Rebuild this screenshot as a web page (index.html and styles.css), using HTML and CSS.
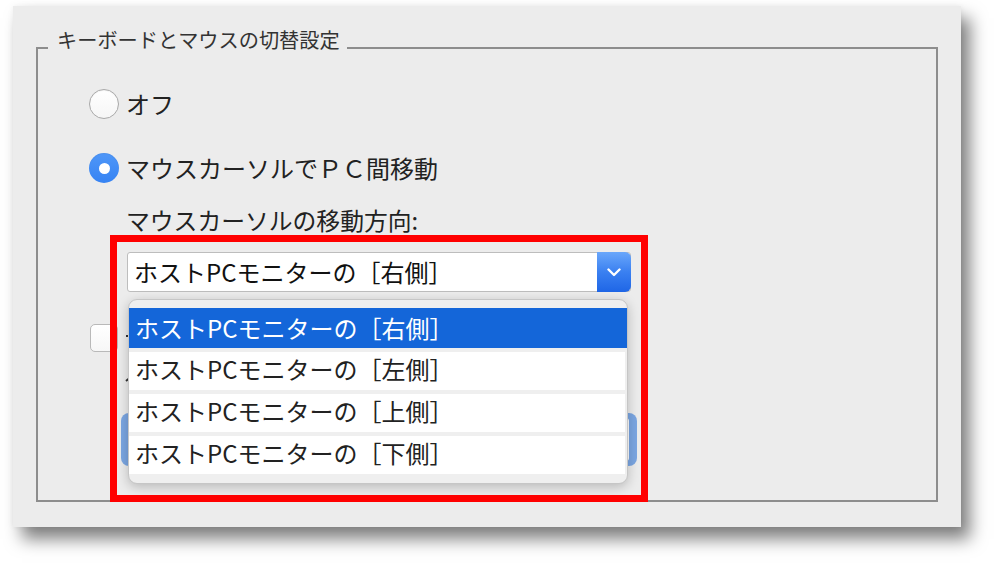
FILE: index.html
```html
<!DOCTYPE html>
<html lang="ja">
<head>
<meta charset="utf-8">
<title>キーボードとマウスの切替設定</title>
<link rel="stylesheet" href="styles.css">
</head>
<body>
<div class="window">
  <div class="group">
    <div class="legend">キーボードとマウスの切替設定</div>
    <div class="options">
      <div class="row row-first">
        <span class="radio"></span>
        <span class="label">オフ</span>
      </div>
      <div class="row row-second">
        <span class="radio radio-on"><span class="dot"></span></span>
        <span class="label">マウスカーソルでＰＣ間移動</span>
      </div>
      <div class="sub">
        <div class="sub-label">マウスカーソルの移動方向:</div>
        <div class="select-wrap">
          <div class="select">
            <div class="select-value">ホストPCモニターの［右側］</div>
            <div class="select-btn">
              <svg width="14" height="9" viewBox="0 0 14 9"><path d="M1.5 1.5 L7 7 L12.5 1.5" fill="none" stroke="#fff" stroke-width="2.4" stroke-linecap="round" stroke-linejoin="round"/></svg>
            </div>
          </div>
          <div class="menu">
            <div class="item selected">ホストPCモニターの［右側］</div>
            <div class="item">ホストPCモニターの［左側］</div>
            <div class="item">ホストPCモニターの［上側］</div>
            <div class="item">ホストPCモニターの［下側］</div>
          </div>
          <div class="highlight"></div>
        </div>
      </div>
      <div class="check-row">
        <span class="checkbox"></span>
        <span class="stub stub-a"></span>
      </div>
      <div class="text-row"><span class="stub stub-b"></span></div>
      <div class="field"><div class="field-inner"></div></div>
    </div>
  </div>
</div>
</body>
</html>
```
FILE: styles.css
```css
html, body {
  margin: 0;
  padding: 0;
  background: #ffffff;
}

body {
  font-family: "Noto Sans CJK JP", "Noto Sans", "Liberation Sans", sans-serif;
  color: #222;
  width: 995px;
  height: 568px;
  overflow: hidden;
}

.window {
  margin: 6px 0 0 13px;
  width: 948px;
  height: 521px;
  box-sizing: border-box;
  padding: 41px 23px 25px;
  background: #ececec;
  box-shadow: 9px 12px 16px rgba(0, 0, 0, 0.5), 0 0 6px rgba(0, 0, 0, 0.06);
}

.group {
  position: relative;
  height: 455px;
  box-sizing: border-box;
  border: 2px solid #8d8d8d;
}

.legend {
  width: max-content;
  margin: -21px 0 0 10px;
  padding: 0 7px 0 9px;
  background: #ececec;
  font-size: 20.2px;
  line-height: 24px;
  color: #333;
}

.options {
  padding-left: 51px;
}

.row {
  display: flex;
  align-items: center;
  gap: 7px;
  height: 30px;
}

.row-first {
  margin-top: 37px;
}

.row-second {
  margin-top: 34px;
}

.radio {
  width: 30px;
  height: 30px;
  box-sizing: border-box;
  border-radius: 50%;
  border: 1px solid #a9a9a9;
  background: linear-gradient(#ffffff, #f6f6f6);
  box-shadow: inset 0 1px 1px rgba(0, 0, 0, 0.05);
  display: flex;
  align-items: center;
  justify-content: center;
}

.radio-on {
  border: none;
  background: linear-gradient(#4f97f8, #3683f3);
}

.dot {
  width: 11px;
  height: 11px;
  border-radius: 50%;
  background: #fff;
}

.label {
  font-size: 24px;
  line-height: 30px;
  color: #222;
}

.sub {
  padding-left: 37px;
}

.sub-label {
  margin-top: 22px;
  font-size: 23.8px;
  line-height: 30px;
  color: #222;
}

.select-wrap {
  position: relative;
  margin: 17px 0 0 1px;
  width: 504px;
  height: 40px;
}

.select {
  display: flex;
  height: 40px;
  box-sizing: border-box;
  border: 1px solid #bdbdbd;
  border-radius: 3px;
  background: #fff;
}

.select-value {
  flex: 1;
  padding-left: 6px;
  font-size: 24px;
  line-height: 38px;
  color: #111;
  white-space: nowrap;
}

.select-btn {
  width: 34px;
  margin: -1px -1px -1px 0;
  border-radius: 0 6px 6px 0;
  background: linear-gradient(#6aa7fb, #3a80f1 50%, #1f66e6);
  display: flex;
  align-items: center;
  justify-content: center;
}

.menu {
  position: absolute;
  z-index: 2;
  left: 1px;
  top: 47px;
  width: 500px;
  height: 185px;
  box-sizing: border-box;
  padding: 8px 0 9px;
  display: flex;
  flex-direction: column;
  gap: 4px;
  background: #efefef;
  border: 1px solid #c6c6c6;
  border-radius: 9px;
  box-shadow: 0 3px 12px rgba(0, 0, 0, 0.22);
}

.item {
  height: 38px;
  margin-right: 2px;
  padding-left: 6px;
  background: #fff;
  font-size: 24px;
  line-height: 34px;
  color: #222;
  white-space: nowrap;
}

.item.selected {
  height: 40px;
  line-height: 39px;
  margin-right: 0;
  background: #1466d9;
  color: #fff;
}

.highlight {
  position: absolute;
  z-index: 3;
  left: -17px;
  top: -17px;
  width: 538px;
  height: 267px;
  box-sizing: border-box;
  border: 7px solid #ff0000;
  pointer-events: none;
}

.check-row {
  display: flex;
  align-items: center;
  gap: 8px;
  margin: 32px 0 0 1px;
  height: 28px;
}

.checkbox {
  width: 28px;
  height: 28px;
  box-sizing: border-box;
  border: 1px solid #b9b9b9;
  border-radius: 5px;
  background: linear-gradient(#ffffff, #f7f7f7);
}

.stub {
  display: block;
  background: #333;
}

.stub-a {
  width: 60px;
  height: 2px;
  margin-bottom: 4px;
}

.stub-b {
  width: 60px;
  height: 2px;
  transform: rotate(-40deg);
  transform-origin: left center;
}

.text-row {
  display: flex;
  align-items: center;
  height: 30px;
  margin: 14px 0 0 37px;
}

.field {
  margin: 17px 0 0 32px;
  width: 516px;
  height: 53px;
  box-sizing: border-box;
  padding: 5px 8px 5px 8px;
  border-radius: 8px;
  background: #7ba6e2;
}

.field-inner {
  height: 100%;
  background: #fff;
  border-radius: 3px;
}
```
